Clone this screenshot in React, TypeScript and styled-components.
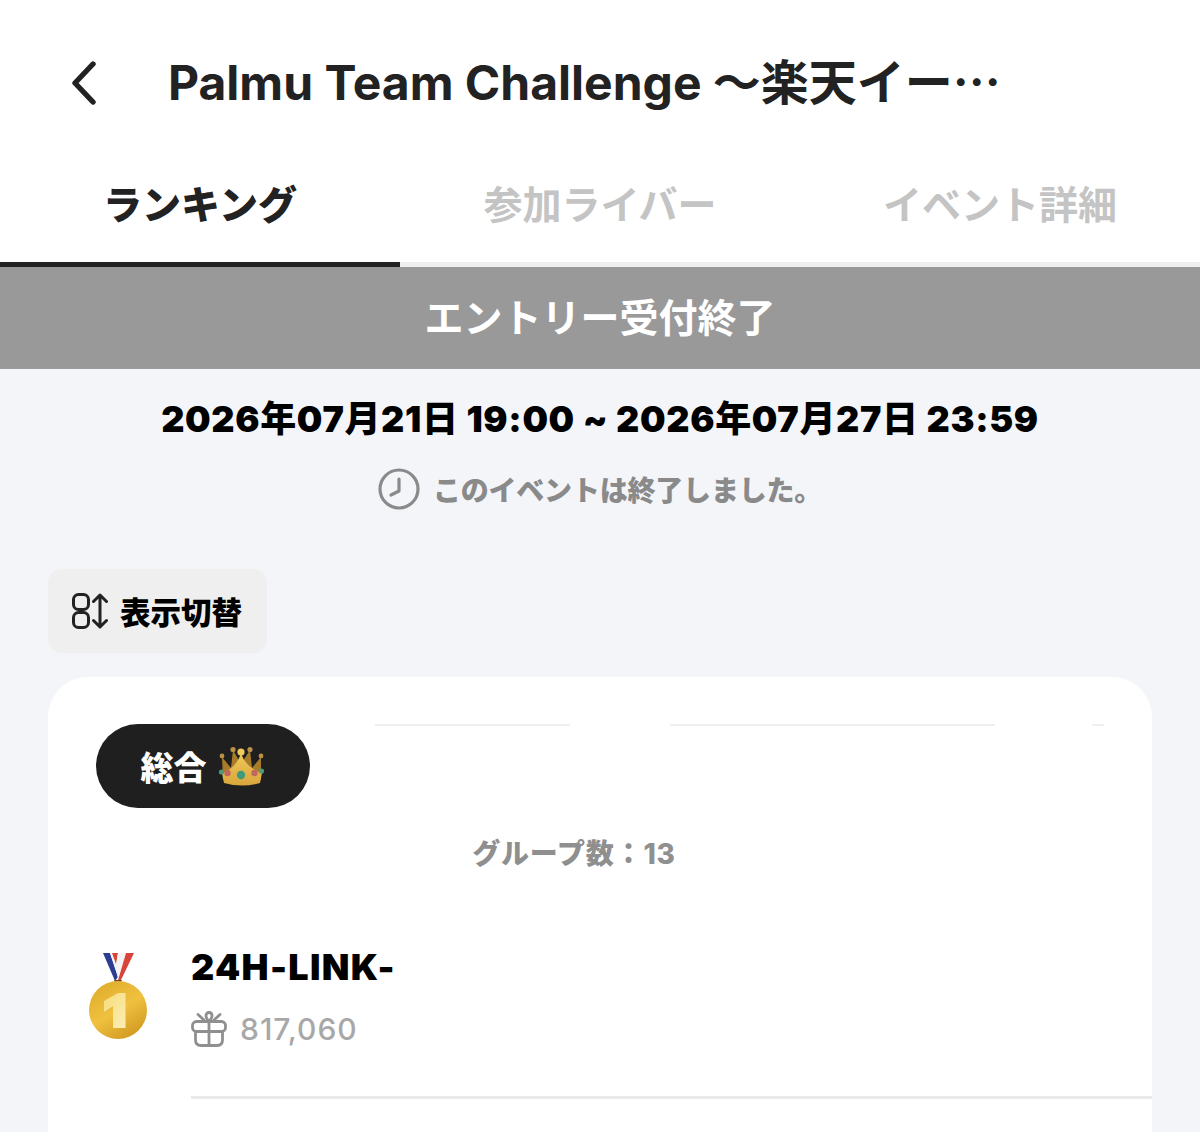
import React from 'react';
import styled, { createGlobalStyle } from 'styled-components';

const GlobalStyle = createGlobalStyle`
  html, body {
    margin: 0;
    padding: 0;
    background: #f4f5f9;
    font-family: Inter, "Noto Sans CJK JP", sans-serif;
  }
  * { box-sizing: border-box; }
`;

const Page = styled.div`
  width: 1200px;
  height: 1132px;
  overflow: hidden;
  background: #f4f5f9;
`;

const Header = styled.header`
  height: 165px;
  background: #fff;
  display: flex;
  align-items: center;
  padding-left: 68px;
  gap: 68px;
`;

const BackButton = styled.div`
  width: 32px;
  height: 48px;
  display: flex;
  align-items: center;
  justify-content: center;
  color: #222;
`;

const Title = styled.h1`
  margin: 0;
  font-size: 48px;
  font-weight: 700;
  color: #222;
  white-space: nowrap;
  line-height: 1;
`;

const Tabs = styled.nav`
  display: flex;
  height: 102px;
  background: #fff;
`;

const Tab = styled.div<{ $active?: boolean }>`
  flex: 1;
  display: flex;
  align-items: center;
  justify-content: center;
  padding-bottom: 24px;
  font-size: 39px;
  font-weight: ${(p) => (p.$active ? 900 : 700)};
  color: ${(p) => (p.$active ? '#222' : '#c4c4c4')};
  border-bottom: 5px solid ${(p) => (p.$active ? '#222' : '#efefef')};
`;

const Banner = styled.div`
  height: 102px;
  padding-bottom: 6px;
  background: #999;
  color: #fff;
  font-size: 39px;
  font-weight: 700;
  display: flex;
  align-items: center;
  justify-content: center;
`;

const Period = styled.div`
  margin-top: 24px;
  height: 46px;
  display: flex;
  align-items: center;
  justify-content: center;
  font-size: 36px;
  font-weight: 900;
  letter-spacing: 0.65px;
  color: #000;
  white-space: nowrap;
`;

const Notice = styled.div`
  margin-top: 28px;
  height: 44px;
  display: flex;
  align-items: center;
  justify-content: center;
  gap: 13px;
  font-size: 28px;
  font-weight: 900;
  letter-spacing: -0.2px;
  color: #8a8a8a;
`;

const SwitchButton = styled.div`
  margin: 58px 0 0 48px;
  width: 219px;
  height: 84px;
  border-radius: 14px;
  background: #efefef;
  display: flex;
  align-items: center;
  padding-left: 24px;
  gap: 12px;
  font-size: 30.5px;
  font-weight: 900;
  color: #000;
`;

const Card = styled.section`
  margin: 24px 48px 0;
  height: 480px;
  border-radius: 40px 40px 0 0;
  background: #fff;
  padding: 47px 0 0 48px;
`;

const PillRow = styled.div`
  position: relative;
  height: 84px;
`;

const Pill = styled.div`
  width: 214px;
  height: 84px;
  border-radius: 42px;
  background: #1f1f1f;
  color: #fff;
  display: flex;
  align-items: center;
  justify-content: center;
  gap: 11px;
  font-size: 33px;
  font-weight: 900;
`;

const FaintLine = styled.div`
  position: absolute;
  top: 0;
  height: 2px;
  background: #efefef;
`;

const GroupCount = styled.div`
  margin: 24px 52px 0 -48px;
  height: 40px;
  display: flex;
  align-items: center;
  justify-content: center;
  font-size: 28px;
  font-weight: 800;
  letter-spacing: 0.8px;
  color: #8f8f8f;
`;

const RankRow = styled.div`
  margin: 78px 0 0 -8px;
  display: flex;
  gap: 43px;
`;

const RankBody = styled.div`
  flex: 1;
  min-width: 0;
`;

const Name = styled.div`
  height: 46px;
  display: flex;
  align-items: center;
  font-size: 36px;
  font-weight: 900;
  color: #000;
  letter-spacing: 1.3px;
  margin-top: -6px;
`;

const Score = styled.div`
  margin-top: 21px;
  display: flex;
  align-items: center;
  gap: 13px;
  font-size: 30px;
  font-weight: 500;
  letter-spacing: 1px;
  color: #a8a8a8;
`;

const Divider = styled.div`
  margin-top: 49px;
  height: 3px;
  background: #e9e9e9;
`;

const ChevronIcon = () => (
  <svg width="28" height="44" viewBox="0 0 28 44" fill="none" stroke="currentColor" strokeWidth="5.4" strokeLinecap="round" strokeLinejoin="round">
    <path d="M23 3 L5 22 L23 41" />
  </svg>
);

const ClockIcon = () => (
  <svg width="42" height="42" viewBox="0 0 42 42" fill="none" stroke="#8a8a8a" strokeWidth="3.2" strokeLinecap="round" strokeLinejoin="round">
    <circle cx="21" cy="21" r="19" />
    <path d="M21 11 V23 L13 27" />
  </svg>
);

const SwitchIcon = () => (
  <svg width="36" height="36" viewBox="0 0 36 36" fill="none" stroke="#222" strokeWidth="3" strokeLinecap="round" strokeLinejoin="round">
    <rect x="1.5" y="1.5" width="15" height="15" rx="5" />
    <rect x="1.5" y="19.5" width="15" height="15" rx="5" />
    <path d="M28 2 V34 M21.5 8.5 L28 2 L34.5 8.5 M21.5 27.5 L28 34 L34.5 27.5" />
  </svg>
);

const CrownIcon = () => (
  <svg width="48" height="42" viewBox="6 9 48 42">
    <defs>
      <linearGradient id="crownFront" x1="0" y1="0" x2="0" y2="1">
        <stop offset="0" stopColor="#f0c95a" />
        <stop offset="1" stopColor="#d9a53c" />
      </linearGradient>
    </defs>
    <path d="M10 21 L19 32 L21 14 L29 28 L38 14 L40 32 L49 21 L49 44 H11 Z" fill="#a87b2a" />
    <circle cx="10" cy="20" r="2.4" fill="#b99045" />
    <circle cx="21" cy="13.5" r="2.6" fill="#b99045" />
    <circle cx="38" cy="13.5" r="2.6" fill="#b99045" />
    <circle cx="49" cy="20" r="2.4" fill="#b99045" />
    <path d="M29 17 C26 27 19 34 10 37 L12 47 Q30 52 48 47 L50 37 C40 34 32 27 29 17 Z" fill="url(#crownFront)" />
    <circle cx="29" cy="16" r="3.6" fill="#eecb5c" />
    <circle cx="9.5" cy="36" r="2.6" fill="#4d9a78" />
    <circle cx="15.5" cy="37" r="3.2" fill="#c0685e" />
    <circle cx="29" cy="39" r="4.2" fill="#3f9a7c" />
    <circle cx="42.5" cy="37" r="3.2" fill="#c0685e" />
    <circle cx="49.5" cy="35" r="2.6" fill="#4d9a78" />
  </svg>
);

const MedalIcon = () => (
  <svg width="60" height="92" viewBox="4 4 60 92">
    <defs>
      <linearGradient id="medalFace" x1="0.2" y1="0" x2="0.8" y2="1">
        <stop offset="0" stopColor="#e0ac2c" />
        <stop offset="0.5" stopColor="#efc13f" />
        <stop offset="1" stopColor="#cf961f" />
      </linearGradient>
      <linearGradient id="medalOne" x1="0" y1="0" x2="1" y2="1">
        <stop offset="0" stopColor="#f7dc7c" />
        <stop offset="1" stopColor="#fbeeb4" />
      </linearGradient>
    </defs>
    <path d="M19 7 H26 L34 31 L31 35 Z" fill="#2c3d92" />
    <path d="M26 7 H30 L35 24 L34 31 Z" fill="#f4f4f4" />
    <path d="M28 7 H34 L32 18 Z" fill="#d8433a" />
    <path d="M34 7 H42 L34 33 L32 20 Z" fill="#f4f4f4" />
    <path d="M42 7 H50 L36 36 H33.5 Z" fill="#d8433a" />
    <path d="M30 34 H38 L36 38 H32 Z" fill="#6b4a20" />
    <circle cx="34" cy="64" r="29" fill="url(#medalFace)" />
    <path d="M20 55 L34 47 H41.5 V82 H29 V60 L20 66 Z" fill="url(#medalOne)" />
  </svg>
);

const GiftIcon = () => (
  <svg width="36" height="36" viewBox="0 0 36 36" fill="none" stroke="#8f8f8f" strokeWidth="2.8" strokeLinecap="round" strokeLinejoin="round">
    <rect x="1.5" y="10.5" width="33" height="10" rx="4" />
    <path d="M4.5 20.5 V29 Q4.5 34.5 10 34.5 H26 Q31.5 34.5 31.5 29 V20.5" />
    <path d="M18 10.5 V34" />
    <path d="M18 10.5 C14 7 14 1.5 18 1.5 C22 1.5 22 7 18 10.5" />
    <path d="M13 9 L7 3.5 M23 9 L29 3.5" />
  </svg>
);

export default function App() {
  return (
    <Page>
      <GlobalStyle />
      <Header>
        <BackButton>
          <ChevronIcon />
        </BackButton>
        <Title>Palmu Team Challenge 〜楽天イー⋯</Title>
      </Header>
      <Tabs>
        <Tab $active>ランキング</Tab>
        <Tab>参加ライバー</Tab>
        <Tab>イベント詳細</Tab>
      </Tabs>
      <Banner>エントリー受付終了</Banner>
      <Period>2026年07月21日 19:00 ~ 2026年07月27日 23:59</Period>
      <Notice>
        <ClockIcon />
        このイベントは終了しました。
      </Notice>
      <SwitchButton>
        <SwitchIcon />
        表示切替
      </SwitchButton>
      <Card>
        <PillRow>
          <Pill>
            総合
            <CrownIcon />
          </Pill>
          <FaintLine style={{ left: 279, width: 195 }} />
          <FaintLine style={{ left: 574, width: 325 }} />
          <FaintLine style={{ left: 996, width: 12 }} />
        </PillRow>
        <GroupCount>グループ数：13</GroupCount>
        <RankRow>
          <MedalIcon />
          <RankBody>
            <Name>24H-LINK-</Name>
            <Score>
              <GiftIcon />
              817,060
            </Score>
            <Divider />
          </RankBody>
        </RankRow>
      </Card>
    </Page>
  );
}
